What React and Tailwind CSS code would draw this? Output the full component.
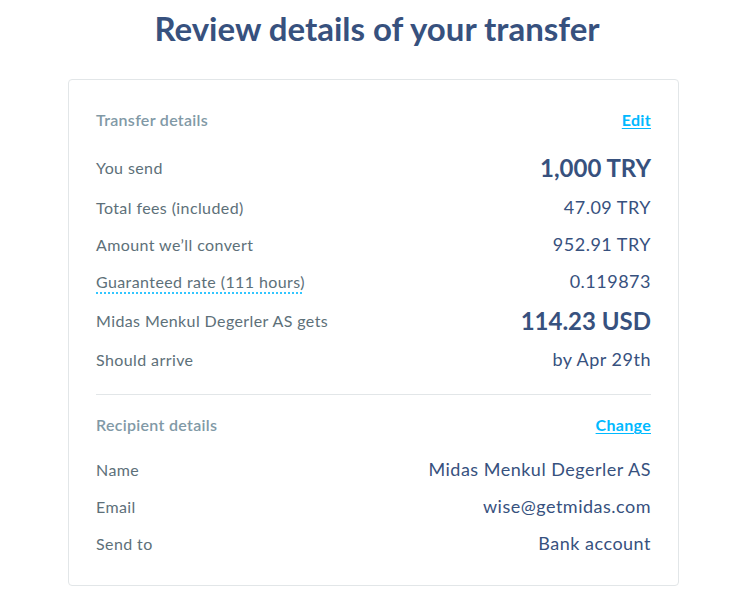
import React from 'react';

const transferRows = [
  { label: 'You send', value: '1,000 TRY', big: true, h: 'h-[42px]' },
  { label: 'Total fees (included)', value: '47.09 TRY', h: 'h-[37px]' },
  { label: 'Amount we\u2019ll convert', value: '952.91 TRY', h: 'h-[37px]' },
  { label: 'Guaranteed rate (111 hours)', value: '0.119873', dotted: true, h: 'h-[37px]' },
  { label: 'Midas Menkul Degerler AS gets', value: '114.23 USD', big: true, h: 'h-[41px]' },
  { label: 'Should arrive', value: 'by Apr 29th', h: 'h-[37px]' },
];

const recipientRows = [
  { label: 'Name', value: 'Midas Menkul Degerler AS' },
  { label: 'Email', value: 'wise@getmidas.com' },
  { label: 'Send to', value: 'Bank account' },
];

function SectionHeader({ title, action }) {
  return (
    <div className="flex h-6 items-center justify-between">
      <span className="text-[16px] font-semibold tracking-[0.3px] text-[#8199a6]">{title}</span>
      <a href="#" className="text-[16px] font-bold tracking-[0.3px] text-[#00b9ff] underline underline-offset-2">
        {action}
      </a>
    </div>
  );
}

function Row({ label, value, big, dotted, h }) {
  return (
    <div className={`flex items-center justify-between ${h}`}>
      <span
        className={`text-[16px] tracking-[0.4px] text-[#5d7079] ${
          dotted ? 'underline decoration-dotted decoration-[#00b9ff] underline-offset-[5px]' : ''
        }`}
      >
        {label}
      </span>
      <span
        className={
          big
            ? 'text-[24px] font-bold text-[#37517e]'
            : 'text-[18px] tracking-[0.5px] text-[#37517e]'
        }
      >
        {value}
      </span>
    </div>
  );
}

export default function App() {
  return (
    <div className="min-h-[611px] bg-white font-['Lato','Open_Sans',sans-serif]">
      <h1 className="pt-[6px] text-center text-[33px] font-bold leading-[44px] text-[#37517e]">
        Review details of your transfer
      </h1>
      <div className="mt-[29px] ml-[68px] w-[611px] rounded border border-[#e2e6e8] px-[27px] pt-[28px] pb-[23px]">
        <SectionHeader title="Transfer details" action="Edit" />
        <div className="mt-[15px]">
          {transferRows.map((r) => (
            <Row key={r.label} {...r} />
          ))}
        </div>
        <div className="mt-4 h-px bg-[#e2e6e8]" />
        <div className="mt-[18px]">
          <SectionHeader title="Recipient details" action="Change" />
        </div>
        <div className="mt-[14px]">
          {recipientRows.map((r) => (
            <Row key={r.label} {...r} h="h-[37px]" />
          ))}
        </div>
      </div>
    </div>
  );
}
